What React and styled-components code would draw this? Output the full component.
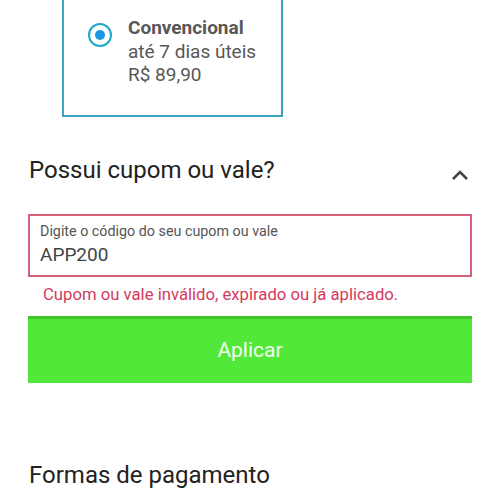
import styled, { createGlobalStyle } from "styled-components";

const Global = createGlobalStyle`
  html, body {
    margin: 0;
    padding: 0;
    background: #fff;
    font-family: Roboto, "Liberation Sans", sans-serif;
    overflow: hidden;
  }
`;

export default function App() {
  return (
    <>
      <Global />
      <Page>
        <ShippingCard>
          <Radio />
          <Option>
            <OptionTitle>Convencional</OptionTitle>
            <OptionLine>até 7 dias úteis</OptionLine>
            <OptionLine>R$ 89,90</OptionLine>
          </Option>
        </ShippingCard>

        <SectionHeader>
          <Title>Possui cupom ou vale?</Title>
          <Chevron viewBox="0 0 24 24">
            <path d="M5 16 L12 9 L19 16" fill="none" stroke="#444" strokeWidth="2.6" />
          </Chevron>
        </SectionHeader>

        <Field>
          <FieldLabel>Digite o código do seu cupom ou vale</FieldLabel>
          <FieldValue>APP200</FieldValue>
        </Field>
        <ErrorText>Cupom ou vale inválido, expirado ou já aplicado.</ErrorText>
        <ApplyButton>Aplicar</ApplyButton>

        <PaymentTitle>Formas de pagamento</PaymentTitle>
      </Page>
    </>
  );
}

const Page = styled.div`
  width: 500px;
  height: 500px;
  overflow: hidden;
  display: flex;
  flex-direction: column;
`;

const ShippingCard = styled.div`
  box-sizing: border-box;
  margin: -60px 0 0 62px;
  width: 221px;
  height: 177px;
  border: 2px solid #3ea3c2;
  padding: 74px 0 0 24px;
  display: flex;
  gap: 16px;
`;

const Radio = styled.div`
  box-sizing: border-box;
  width: 24px;
  height: 24px;
  margin-top: 7px;
  border-radius: 50%;
  border: 2px solid #1fa6cc;
  flex-shrink: 0;
  display: flex;
  align-items: center;
  justify-content: center;
  &::after {
    content: "";
    width: 10px;
    height: 10px;
    border-radius: 50%;
    background: #1a96e6;
  }
`;

const Option = styled.div`
  display: flex;
  flex-direction: column;
  color: #575757;
  font-size: 19px;
  line-height: 23.5px;
`;

const OptionTitle = styled.div`
  font-weight: 700;
`;

const OptionLine = styled.div``;

const SectionHeader = styled.div`
  display: flex;
  align-items: center;
  justify-content: space-between;
  margin: 37px 28px 0 29px;
  height: 32px;
`;

const Title = styled.div`
  font-size: 24px;
  color: #222;
`;

const Chevron = styled.svg`
  width: 24px;
  height: 24px;
  margin-top: 10px;
`;

const Field = styled.div`
  box-sizing: border-box;
  margin: 28px 28px 0 28px;
  height: 63px;
  border: 2px solid #d5607a;
  padding: 6px 0 0 10px;
  display: flex;
  flex-direction: column;
`;

const FieldLabel = styled.div`
  font-size: 14.3px;
  color: #555;
  line-height: 18px;
`;

const FieldValue = styled.div`
  font-size: 19px;
  color: #444;
  line-height: 26px;
  margin-top: 2px;
`;

const ErrorText = styled.div`
  margin: 8px 0 0 43px;
  font-size: 16.7px;
  line-height: 20px;
  color: #d43a5e;
`;

const ApplyButton = styled.div`
  box-sizing: border-box;
  margin: 11px 28px 0 28px;
  height: 67px;
  padding-bottom: 3px;
  background: #52e83a;
  border-top: 3px solid #40c62b;
  color: #f4fff0;
  font-size: 21px;
  display: flex;
  align-items: center;
  justify-content: center;
`;

const PaymentTitle = styled.div`
  margin: 78px 0 0 29px;
  font-size: 24px;
  color: #222;
`;
